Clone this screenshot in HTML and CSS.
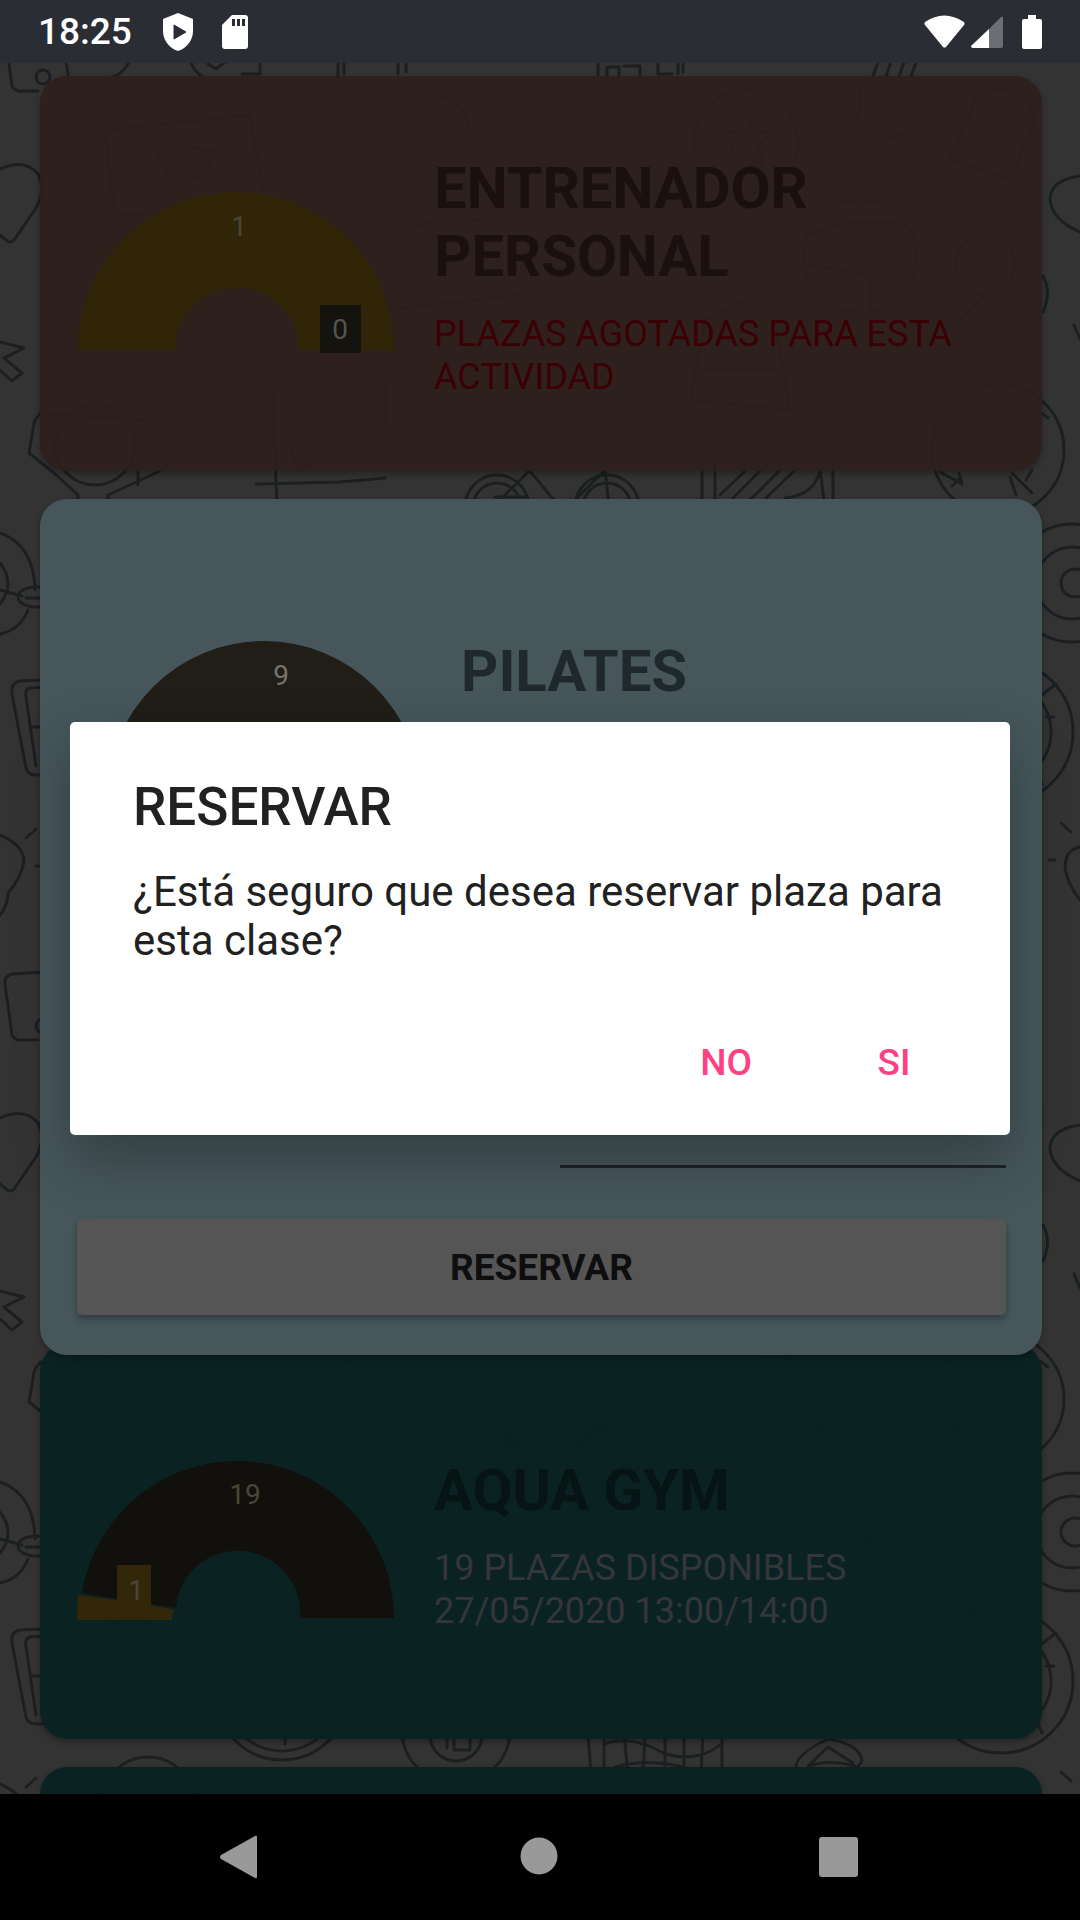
FILE: index.html
```html
<!DOCTYPE html>
<html lang="es">
<head>
<meta charset="utf-8">
<meta name="viewport" content="width=device-width, initial-scale=1">
<title>Reservas</title>
<link rel="stylesheet" href="styles.css">
</head>
<body>
<header class="status">
  <span class="clock">18:25</span>
  <svg class="status-icon shield" width="30" height="38" viewBox="0 0 30 38" aria-hidden="true"><path d="M15 0L30 6V18C30 27 24 35 15 38C6 35 0 27 0 18V6Z" fill="#fff"/><path d="M11 12L23 19L11 26Z" fill="#2a2e34" stroke="#2a2e34" stroke-linejoin="round"/></svg>
  <svg class="status-icon" width="26" height="34" viewBox="0 0 26 34" aria-hidden="true"><path d="M10 0H23Q26 0 26 3V31Q26 34 23 34H3Q0 34 0 31V10Z" fill="#fff"/><path d="M10 4h3v7h-3zM15 4h3v7h-3zM20 4h3v7h-3z" fill="#2a2e34"/></svg>
  <span class="status-right">
    <svg width="41" height="34" viewBox="0 0 41 34" aria-hidden="true"><path d="M1 7Q20 -6 40 7Q41 9 40 10L22 32Q20.500 33 19 32L1 10Q0 9 1 7Z" fill="#fff"/></svg>
    <svg width="32" height="34" viewBox="0 0 32 34" aria-hidden="true"><path d="M18 14L30 2Q32 1 32 3V31Q32 33 30 33H18Z" fill="#6b6f73"/><path d="M18 14V33H2Q0 33 0 31Z" fill="#fff"/></svg>
    <svg class="battery" width="20" height="34" viewBox="0 0 20 34" aria-hidden="true"><path d="M6 0H14V4H18Q20 4 20 6V32Q20 34 18 34H2Q0 34 0 32V6Q0 4 2 4H6Z" fill="#fff"/></svg>
  </span>
</header>

<main class="screen">
  <svg class="doodles" width="100%" height="100%" aria-hidden="true">
    <defs>
      <pattern id="doodle" y="-63" width="1080" height="949" patternUnits="userSpaceOnUse">
        <g fill="none" stroke="#1b1f1f" stroke-width="3" stroke-linecap="round" stroke-linejoin="round">
          <path d="M60 22L12 25Q4 27 5 35L12 86Q15 92 22 91H38M62 30L68 75"/><circle cx="43" cy="77" r="7"/>
          <path d="M130 60Q124 74 112 77M190 60Q194 72 203 77M208 64l8 5l10-8M242 74h18V60M338 60v17M344 60v14M398 60v14M406 60v12M598 60v16M607 78V67h12v10M624 66h16v10M658 60v14h14M678 60v14M683 60v12M873 76l5-14M886 76l5-14M899 76l6-16M911 76l6-16"/>
          <path d="M0 169Q25 158 38 174Q46 190 36 208L14 240Q10 244 6 240L0 235"/>
          <path d="M0 342L24 348L4 358L22 373L12 381L0 370"/>
          <path d="M44 413Q34 415 33 430L29 453L54 473L78 495V502M108 502V495L160 471M138 465V485M40 413L145 420"/>
          <path d="M256 484L340 482L385 478M272 385L277 505"/>
          <circle cx="497" cy="507" r="32"/><circle cx="497" cy="507" r="24"/><path d="M495 497h30M530 470L500 500M530 471L562 510M575 500L605 470L609 505"/>
          <circle cx="607" cy="507" r="32"/><circle cx="607" cy="507" r="24"/>
          <path d="M702 465V505M715 465V505M720 495L745 471M733 498L760 471M750 500L780 470M766 498L795 470M785 498Q815 495 820 470L824 500M833 471V505"/>
          <circle cx="998" cy="450" r="66"/><path d="M940 472l22 12l-3-11M952 486l8-8M1012 473l20 20M1016 495l-6-18M1026 480l6-10M1040 412l8 6"/>
          <path d="M0 533Q34 545 35 590M28 610Q20 630 0 634M0 563Q16 584 0 604M0 590L22 596"/><ellipse cx="36" cy="597" rx="18" ry="10"/><path d="M26 598h20"/>
          <path d="M60 679L20 681Q10 683 12 694L26 768Q28 775 36 775H60M60 686L30 688Q24 690 26 697L36 766M30 727H60"/>
          <path d="M0 835Q24 845 24 862Q20 880 8 893Q8 905 0 915M26 838L36 829M36 866h8"/>
          <path d="M1080 176Q1050 180 1050 200Q1052 220 1080 232M1043 276Q1052 292 1043 312M1074 325l6 14"/>
          <circle cx="1072" cy="583" r="59"/><circle cx="1072" cy="583" r="36"/><circle cx="1075" cy="583" r="14"/>
          <circle cx="1001" cy="732" r="72"/><circle cx="1001" cy="732" r="50"/><path d="M1038 698L1056 684M1046 717h8M1036 770L1042 784"/>
          <path d="M1080 847Q1065 850 1065 868Q1068 885 1080 900M1061 823L1071 832M1049 860h6"/>
          <circle cx="282" cy="745" r="66"/><circle cx="282" cy="745" r="57"/><path d="M285 787V795M282 745L292 727"/>
          <circle cx="456" cy="781" r="54"/><circle cx="456" cy="786" r="26"/><path d="M447 790v9M454 790v11h16v-11"/>
          <circle cx="148" cy="854" r="46"/>
          <path d="M588 785l3 40M604 785V825M624 785L628 825M645 785L643 825M665 785V825M684 785V825M703 785L701 825M722 785V825M604 795Q632 785 665 805Q700 814 722 794M615 818Q650 808 690 820"/>
          <path d="M796 818Q796 805 828 790Q860 795 862 812L855 822M808 817L828 798L853 814M808 817Q830 810 855 817"/>
          <path d="M105 130L250 115L265 200M105 130L115 215L170 212M155 150l20-15l15 12l25 5l-12 25l-30 5z"/>
          <circle cx="295" cy="255" r="34"/><circle cx="295" cy="255" r="17"/><path d="M380 270Q400 210 480 220M385 310L520 295Q500 330 470 350M430 100Q460 90 470 130"/>
          <circle cx="746" cy="142" r="52"/><path d="M746 112l8 20h20l-16 14l6 20l-18-12l-18 12l6-20l-16-14h20z"/>
          <path d="M860 90l-2 30l20 20l25-5M950 160L975 100Q990 80 1025 95L1035 120L1010 180Z"/>
          <circle cx="860" cy="256" r="56"/><path d="M810 235Q850 215 905 225M810 265L870 275V310"/>
          <circle cx="985" cy="265" r="30"/><path d="M960 320L990 290L1030 330M690 400L705 320L745 300L775 320L790 410ZM700 370H780"/>
          <circle cx="95" cy="445" r="40"/><path d="M290 450L385 385V425L300 470Z"/>
          <path d="M865 590L905 570L920 530L945 570L990 580L960 620L975 665L925 650L895 665L900 615Z"/>
          <path d="M380 560L450 550L440 590L390 600ZM170 570V540H280V590H250"/>
          <circle cx="130" cy="715" r="45"/><circle cx="825" cy="745" r="35"/>
        </g>
      </pattern>
    </defs>
    <rect width="100%" height="100%" fill="#333333"/>
    <rect width="100%" height="100%" fill="url(#doodle)"/>
  </svg>

  <section class="card card-full">
    <svg class="gauge" width="314" height="170" viewBox="0 0 314 170" role="img" aria-label="1 ocupada, 0 libres">
      <path d="M-2 158A158 158 0 0 1 314 158H219A62 62 0 0 0 95 158Z" fill="#312508"/>
      <rect x="240" y="113" width="41" height="48" fill="#14130d"/>
      <text class="gauge-text dim" x="159" y="44">1</text>
      <text class="gauge-text mid" x="260" y="147">0</text>
    </svg>
    <div class="info"><h2>ENTRENADOR PERSONAL</h2><p>PLAZAS AGOTADAS PARA ESTA ACTIVIDAD</p></div>
  </section>

  <section class="card card-open">
    <div class="open-row">
      <svg class="gauge" width="314" height="170" viewBox="0 0 314 170" role="img" aria-label="9 libres">
        <path d="M0 157A157 157 0 0 1 314 157H219A62 62 0 0 0 95 157Z" fill="#211d17"/>
        <text class="gauge-text light" x="174" y="44">9</text>
      </svg>
      <div class="info"><h2>PILATES</h2></div>
    </div>
    <div class="form"><input class="field" type="text" aria-label="Clase"></div>
    <button class="reserve" type="button">RESERVAR</button>
  </section>

  <section class="card card-free card-next">
    <svg class="gauge" width="314" height="170" viewBox="0 0 314 170" role="img" aria-label="19 libres, 1 ocupada">
      <path d="M2 133A157 157 0 0 1 314 158H220A62 62 0 0 0 96 148Z" fill="#12100d"/>
      <path d="M-2 135L37 140V105H71V145L94 150Q92 155 92 160H-3Q-3 147 -2 135Z" fill="#33270a"/>
      <text class="gauge-text dim" x="165" y="44">19</text>
      <text class="gauge-text dim" x="56" y="140">1</text>
    </svg>
    <div class="info"><h2>AQUA GYM</h2><p>19 PLAZAS DISPONIBLES<br>27/05/2020 13:00/14:00</p></div>
  </section>

  <section class="card card-free"></section>

  <div class="dialog-layer">
    <div class="dialog" role="alertdialog" aria-labelledby="dialog-title" aria-describedby="dialog-text">
      <h1 id="dialog-title">RESERVAR</h1>
      <p id="dialog-text">¿Está seguro que desea reservar plaza para esta clase?</p>
      <div class="actions"><button type="button">NO</button><button type="button">SI</button></div>
    </div>
  </div>
</main>

<nav class="navbar" aria-label="Sistema">
  <button type="button" aria-label="Atrás"><svg width="40" height="44" viewBox="0 0 40 44"><path d="M34 1Q36 0 36 2V42Q36 44 34 43L0 24Q-2 22 0 20Z" fill="#999"/></svg></button>
  <button type="button" aria-label="Inicio"><svg width="40" height="44" viewBox="0 0 40 44"><circle cx="19" cy="21" r="18.500" fill="#999"/></svg></button>
  <button type="button" aria-label="Recientes"><svg width="40" height="44" viewBox="0 0 40 44"><rect y="2" width="39" height="40" rx="3" fill="#999"/></svg></button>
</nav>
</body>
</html>
```
FILE: styles.css
```css
* { box-sizing: border-box; }

body {
  margin: 0;
  height: 100vh;
  display: flex;
  flex-direction: column;
  background: #000;
  font-family: Roboto, "Liberation Sans", sans-serif;
}

h1, h2, p { margin: 0; }

button {
  border: 0;
  padding: 0;
  background: none;
  font-family: inherit;
}

.status {
  flex: none;
  height: 63px;
  display: flex;
  align-items: center;
  padding: 0 38px;
  background: #2a2e34;
  color: #fff;
}
.clock { font-size: 37px; font-weight: 500; line-height: 43px; }
.status-icon { margin-left: 29px; }
.shield { margin-left: 31px; }
.status-right { margin-left: auto; display: flex; gap: 6px; }
.battery { margin-left: 13px; }

.screen {
  flex: 1;
  min-height: 0;
  position: relative;
  overflow: hidden;
  display: flex;
  flex-direction: column;
  gap: 28px;
  padding: 13px 38px 0 40px;
}
.doodles { position: absolute; inset: 0; }

.card {
  flex: none;
  position: relative;
  min-height: 395px;
  border-radius: 27px;
  display: flex;
  align-items: center;
  gap: 40px;
  padding: 6px 36px 0 40px;
  box-shadow: 0 3px 6px rgba(0, 0, 0, .3);
}
.card-full { background: rgba(46, 30, 27, .92); }
.card-free { background: rgba(7, 34, 33, .93); }
.card-next { margin-top: -39px; }
.card-open {
  z-index: 1;
  min-height: 856px;
  flex-direction: column;
  align-items: stretch;
  gap: 0;
  padding: 138px 36px 40px 37px;
  background: #46565b;
}
.open-row { display: flex; gap: 40px; padding-left: 30px; }
.open-row .gauge { margin-top: 4px; }

.gauge { flex: none; overflow: visible; }
.gauge-text { font-size: 28px; text-anchor: middle; }
.dim { fill: #4a4639; }
.mid { fill: #55544f; }
.light { fill: #77746f; }

.info { min-width: 0; }
.info h2 { font-size: 58px; line-height: 68px; font-weight: 700; }
.info p { margin-top: 23px; font-size: 36px; line-height: 43px; }
.card-full h2 { color: #1a100f; }
.card-full p { color: #3a0004; }
.card-open h2 { color: #1f292c; }
.card-free h2 { color: #061413; }
.card-free p { color: #343639; }

.form { margin-top: auto; display: flex; justify-content: flex-end; }
.field {
  width: 48%;
  height: 60px;
  border: 0;
  border-bottom: 3px solid #1c2528;
  background: none;
  font-size: 37px;
}
.reserve {
  margin-top: 51px;
  height: 96px;
  border-radius: 5px;
  background: #555;
  color: #0e0e0e;
  font-size: 37px;
  line-height: 43px;
  font-weight: 700;
  box-shadow: 0 4px 6px rgba(0, 0, 0, .3);
}

.dialog-layer {
  position: absolute;
  inset: 0;
  z-index: 2;
  display: flex;
  align-items: center;
  justify-content: center;
  padding: 0 70px;
}
.dialog {
  flex: 1;
  padding: 54px 63px 10px;
  border-radius: 5px;
  background: #fff;
  color: #212121;
  box-shadow: 0 24px 56px rgba(0, 0, 0, .28);
}
.dialog h1 { font-size: 53px; line-height: 62px; font-weight: 500; }
.dialog p { margin-top: 29px; font-size: 42px; line-height: 49px; }
.actions { display: flex; justify-content: flex-end; margin: 34px -31px 0 0; }
.actions button {
  min-width: 168px;
  height: 126px;
  color: #ff4081;
  font-size: 37px;
  line-height: 43px;
  font-weight: 500;
}

.navbar {
  flex: none;
  height: 126px;
  display: flex;
  justify-content: center;
  background: #000;
}
.navbar button {
  width: 299px;
  display: flex;
  align-items: center;
  justify-content: center;
}
.navbar svg { overflow: visible; }
```
